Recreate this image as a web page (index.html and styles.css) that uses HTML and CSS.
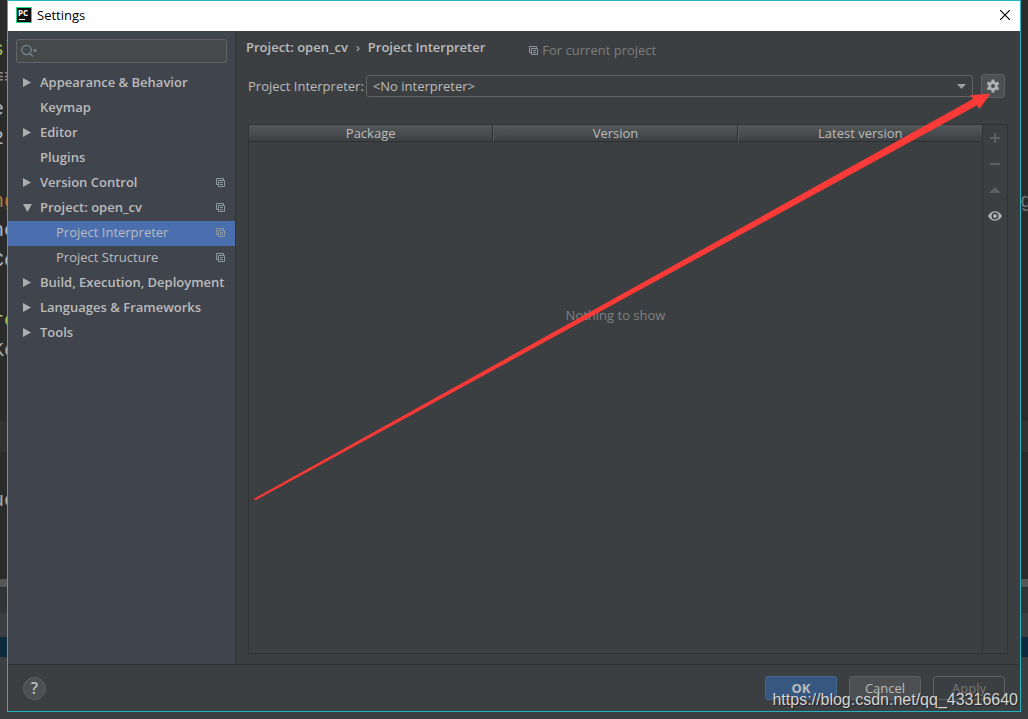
FILE: index.html
```html
<!DOCTYPE html>
<html lang="en">
<head>
<meta charset="utf-8">
<title>Settings</title>
<link rel="stylesheet" href="styles.css">
</head>
<body>
<svg class="defs" width="0" height="0" aria-hidden="true">
  <symbol id="copy" viewBox="0 0 9 9"><path d="M2 6.500H.5V.5h7V2M2.500 2.500h6v6h-6zM4 4.500h3M4 6.500h3" fill="none" stroke="currentColor"/></symbol>
  <symbol id="right" viewBox="0 0 8 9"><path d="M0 0l8 4.500L0 9z" fill="currentColor"/></symbol>
  <symbol id="down" viewBox="0 0 9 8"><path d="M0 0h9L4.500 8z" fill="currentColor"/></symbol>
</svg>

<div class="editor" aria-hidden="true">
  <span class="code green" style="top:38px">sl</span>
  <span class="code rule" style="top:66px">≡≡</span>
  <span class="code blue" style="top:98px">e'</span>
  <span class="code blue" style="top:127px">2.</span>
  <span class="code gold" style="top:190px">ng</span>
  <span class="code blue" style="top:219px">ne</span>
  <span class="code blue" style="top:249px">Co</span>
  <span class="code green" style="top:309px">re</span>
  <span class="code plain" style="top:339px">Ke</span>
  <span class="code plain" style="top:489px">uc</span>
  <span class="code end" style="top:190px">g</span>
</div>

<div class="dialog" role="dialog" aria-labelledby="title">
  <header class="titlebar">
    <svg class="logo" viewBox="0 0 16 16" aria-hidden="true"><rect width="16" height="16" fill="#21d789"/><rect x="1" y="1" width="14" height="14" fill="#111"/><path d="M3 12.500h6" stroke="#fff"/><text x="2" y="9" class="logo-text">PC</text></svg>
    <h1 id="title">Settings</h1>
    <button class="close" aria-label="Close"><svg width="10" height="10" viewBox="0 0 10 10"><path d="M0 0l10 10M10 0L0 10" stroke="#000" stroke-width="1.200"/></svg></button>
  </header>

  <div class="content">
    <aside class="sidebar">
      <label class="search">
        <svg width="18" height="14" viewBox="0 0 18 14" aria-hidden="true"><circle cx="5.500" cy="6" r="4.700" fill="none" stroke="#76868f" stroke-width="1.300"/><path d="M9 9.500l3 3" stroke="#76868f" stroke-width="1.500"/><path d="M11.500 5.500h5L14 8.500z" fill="#76868f"/></svg>
        <input type="text" aria-label="Search settings">
      </label>
      <nav class="tree" aria-label="Settings">
        <a class="item" href="#"><span class="twist"><svg width="8" height="9"><use href="#right"/></svg></span><span class="name">Appearance &amp; Behavior</span></a>
        <a class="item" href="#"><span class="twist"></span><span class="name">Keymap</span></a>
        <a class="item" href="#"><span class="twist"><svg width="8" height="9"><use href="#right"/></svg></span><span class="name">Editor</span></a>
        <a class="item" href="#"><span class="twist"></span><span class="name">Plugins</span></a>
        <a class="item" href="#"><span class="twist"><svg width="8" height="9"><use href="#right"/></svg></span><span class="name">Version Control</span><svg class="copy" width="9" height="9"><use href="#copy"/></svg></a>
        <a class="item" href="#"><span class="twist"><svg width="9" height="8"><use href="#down"/></svg></span><span class="name">Project: open_cv</span><svg class="copy" width="9" height="9"><use href="#copy"/></svg></a>
        <a class="item child selected" href="#" aria-current="page"><span class="name">Project Interpreter</span><svg class="copy" width="9" height="9"><use href="#copy"/></svg></a>
        <a class="item child" href="#"><span class="name">Project Structure</span><svg class="copy" width="9" height="9"><use href="#copy"/></svg></a>
        <a class="item" href="#"><span class="twist"><svg width="8" height="9"><use href="#right"/></svg></span><span class="name">Build, Execution, Deployment</span></a>
        <a class="item" href="#"><span class="twist"><svg width="8" height="9"><use href="#right"/></svg></span><span class="name">Languages &amp; Frameworks</span></a>
        <a class="item" href="#"><span class="twist"><svg width="8" height="9"><use href="#right"/></svg></span><span class="name">Tools</span></a>
      </nav>
    </aside>

    <main class="main">
      <div class="crumbs">
        <h2>Project: open_cv</h2>
        <span class="sep">›</span>
        <h2>Project Interpreter</h2>
        <p class="scope"><svg class="copy" width="9" height="9"><use href="#copy"/></svg>For current project</p>
      </div>
      <div class="interpreter">
        <label for="interp">Project Interpreter:</label>
        <div class="combo">
          <select id="interp"><option>&lt;No interpreter&gt;</option></select>
          <svg class="combo-arrow" width="9" height="5" viewBox="0 0 9 5" aria-hidden="true"><path d="M0 0h9L4.500 5z" fill="#9a9da0"/></svg>
        </div>
        <button class="gear" aria-label="Interpreter options"><svg width="14" height="14" viewBox="0 0 14 14"><g stroke="#afb1b3" stroke-width="3"><path d="M7 .5v13M1.400 3.750l11.200 6.500M1.400 10.250l11.200-6.500"/></g><circle cx="7" cy="7" r="4.700" fill="#afb1b3"/><circle cx="7" cy="7" r="2" fill="#4c5052"/></svg></button>
      </div>
      <div class="packages">
        <table>
          <thead><tr><th scope="col">Package</th><th scope="col">Version</th><th scope="col">Latest version</th></tr></thead>
          <tbody><tr><td colspan="3">Nothing to show</td></tr></tbody>
        </table>
        <div class="tools">
          <button aria-label="Install" disabled><svg width="12" height="12" viewBox="0 0 12 12"><path d="M1 6h10M6 1v10" stroke="#5d6062" stroke-width="2"/></svg></button>
          <button aria-label="Uninstall" disabled><svg width="12" height="12" viewBox="0 0 12 12"><path d="M1 6h10" stroke="#5d6062" stroke-width="2"/></svg></button>
          <button aria-label="Upgrade" disabled><svg width="12" height="12" viewBox="0 0 12 12"><path d="M0 9l6-6 6 6z" fill="#5d6062"/></svg></button>
          <button aria-label="Show early releases"><svg width="14" height="12" viewBox="0 0 14 12"><path d="M0 6C3-.3 11-.3 14 6 11 12.300 3 12.300 0 6z" fill="#afb1b3"/><circle cx="7" cy="6" r="3.500" fill="#3c3f41"/><circle cx="7" cy="6" r="2" fill="#afb1b3"/></svg></button>
        </div>
      </div>
    </main>
  </div>

  <footer class="footer">
    <button class="help" aria-label="Help">?</button>
    <div class="actions">
      <button class="btn primary">OK</button>
      <button class="btn">Cancel</button>
      <button class="btn off" disabled>Apply</button>
    </div>
  </footer>
</div>

<svg class="pointer" width="1028" height="719" viewBox="0 0 1028 719" aria-hidden="true"><path d="M254 499L973.500 99l-3-3.500L990 94l-10.500 14.500-2.500-3.500L255.500 500z" fill="#fc3a38" stroke="#fc3a38" stroke-width=".6"/></svg>
<p class="watermark">https://blog.csdn.net/qq_43316640</p>
</body>
</html>
```
FILE: styles.css
```css
* { box-sizing: border-box; }

body {
  position: relative;
  display: flex;
  height: 100vh;
  margin: 0;
  padding: 0 7px 7px;
  overflow: hidden;
  color: #bbb;
  font: 13px/18px "Open Sans", "Noto Sans", sans-serif;
  background: linear-gradient(#2b2b2b 421px, #323232 421px 452px, #2b2b2b 452px 579px, #555 579px 587px, #2b2b2b 587px 588px, #313335 588px 613px, #3c3f41 613px 637px, #0d293e 637px 657px, #3c3f41 657px);
}

h1, h2, p { margin: 0; font-size: 13px; }
h2 { font-weight: 600; }
button, input, select { padding: 0; color: inherit; font: inherit; }
button { display: flex; align-items: center; justify-content: center; border: 0; background: none; }
a { color: inherit; text-decoration: none; }
.defs { position: absolute; }

.editor { position: absolute; inset: 0; overflow: hidden; }
.code { position: absolute; left: -8px; font: 20px/24px "Liberation Mono", monospace; }
.green { color: #a5c261; }
.rule { color: #8a8a8a; }
.blue { color: #a9b7c6; }
.gold { color: #b5783a; }
.plain { color: #a9a9a0; }
.end { right: -4px; left: auto; color: #777; }

.dialog { position: relative; display: flex; flex: 1; flex-direction: column; border: 1px solid #20b5c0; background: #3c3f41; }

.titlebar { display: flex; align-items: center; gap: 5px; height: 30px; padding: 0 9px 2px 8px; color: #000; background: #fff; }
.titlebar h1 { flex: 1; font-weight: 400; }
.logo { width: 16px; height: 16px; }
.logo-text { font: bold 8px "Open Sans", sans-serif; fill: #fff; }
.close { width: 12px; height: 12px; }

.content { display: flex; flex: 1; }
.sidebar { flex: none; width: 228px; padding-top: 8px; border-right: 1px solid #323232; background: #40444d; }
.search { display: flex; align-items: center; height: 24px; margin: 0 8px 8px; padding: 0 4px; border: 1px solid #646464; border-radius: 3px; background: #45494a; }
.search input { flex: 1; min-width: 0; border: 0; outline: 0; background: none; }
.item { display: flex; align-items: center; height: 25px; padding: 0 10px 3px 14px; font-weight: 600; }
.child { padding-left: 48px; font-weight: 400; }
.selected { background: #4b6eaf; }
.twist { display: flex; flex: none; align-items: center; width: 18px; padding: 1px 0 0 1px; color: #adadad; }
.name { flex: 1; min-width: 0; white-space: nowrap; }
.copy { margin-top: 1px; color: #8b98a0; }

.main { display: flex; flex: 1; flex-direction: column; padding: 7px 12px 10px; }
.crumbs { display: flex; gap: 8px; height: 36px; margin-left: -2px; }
.scope { display: flex; align-items: center; gap: 4px; height: 18px; margin: 3px 0 0 36px; color: #7d7d7d; }
.interpreter { display: flex; align-items: center; height: 24px; padding-right: 3px; }
.combo { position: relative; flex: 1; margin: 0 8px 0 2px; }
.combo select { display: block; width: 100%; height: 22px; padding: 0 6px; border: 1px solid #646464; border-radius: 3px; background: #3c3f41; appearance: none; }
.combo-arrow { position: absolute; top: 9px; right: 7px; }
.gear { width: 24px; height: 24px; border: 1px solid #5e6060; border-radius: 3px; background: #4c5052; }

.packages { display: flex; flex: 1; margin-top: 26px; border: 1px solid #323232; }
table { flex: 1; width: 100%; border-spacing: 0; table-layout: fixed; }
thead { height: 17px; }
th { height: 17px; padding: 0; border-right: 1px solid #2d2f30; border-bottom: 1px solid #2d2f30; border-left: 1px solid #5a5d5e; font-weight: 400; line-height: 16px; background: linear-gradient(#54585a, #3e4143); }
th:first-child { border-left: 0; }
th:last-child { border-right: 0; }
td { padding: 164px 0 0; color: #808080; text-align: center; vertical-align: top; }
.tools { display: flex; flex: none; flex-direction: column; width: 25px; border-left: 1px solid #323232; }
.tools button { height: 26px; }

.footer { display: flex; align-items: center; justify-content: space-between; height: 47px; padding: 0 15px; border-top: 1px solid #323232; }
.help { width: 23px; height: 23px; border: 1px solid #5e6060; border-radius: 50%; font-size: 16px; font-weight: 600; background: #4c5052; }
.actions { display: flex; gap: 12px; }
.btn { width: 72px; height: 24px; border: 1px solid #5e6060; border-radius: 3px; background: #4c5052; }
.primary { border-color: #43698d; font-weight: 700; background: #365880; }
.off { color: #777; background: none; }

.pointer { position: absolute; top: 0; left: 0; }
.watermark { position: absolute; right: 10px; bottom: 10px; color: #d5d5d5; font: 16px/18px "Liberation Sans", sans-serif; text-shadow: 1px 1px 1px #222; }
```
